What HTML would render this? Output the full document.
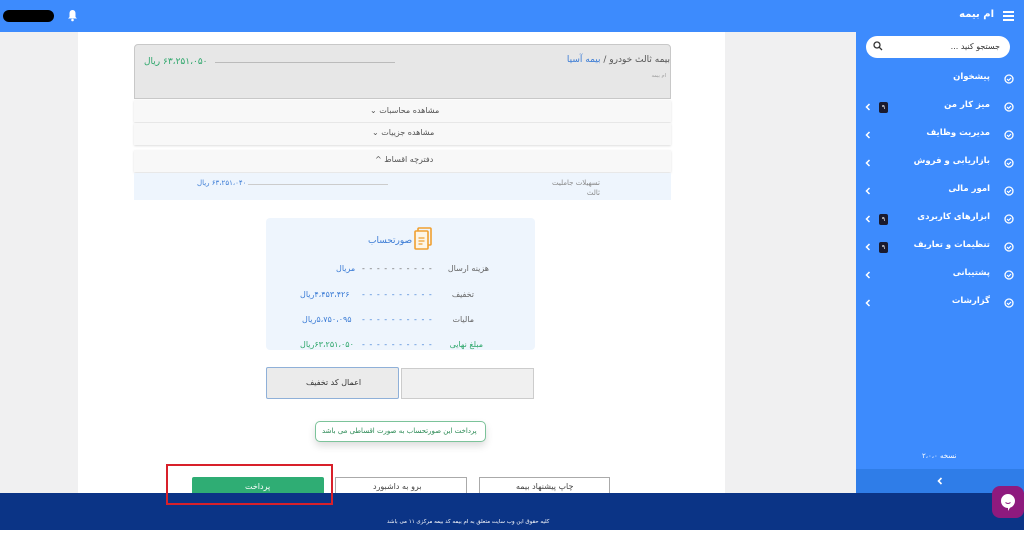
<!DOCTYPE html>
<html><head><meta charset="utf-8"><style>
*{margin:0;padding:0;box-sizing:border-box}
body{width:1024px;height:533px;overflow:hidden;position:relative;background:#fff;font-family:"DejaVu Sans","Liberation Sans",sans-serif;direction:rtl}
.a{position:absolute}
.t{font-size:8px;white-space:nowrap}
</style></head><body>
<div class="a" style="left:0;top:32px;width:78px;height:461px;background:#f0f0f1"></div>
<div class="a" style="left:725px;top:32px;width:131px;height:461px;background:#f0f0f1"></div>
<div class="a" style="left:0;top:0;width:1024px;height:32px;background:#3d8bfd"></div>
<div class="a" style="left:3px;top:10px;width:51px;height:12px;border-radius:6px;background:#000"></div>
<svg class="a" style="left:67px;top:9px" width="11" height="13" viewBox="0 0 11 13"><path d="M5.5 1C3.5 1 2.5 2.6 2.5 4.5V8L1 9.5H10L8.5 8V4.5C8.5 2.6 7.5 1 5.5 1Z" fill="#fff"/><circle cx="5.5" cy="11" r="1.3" fill="#fff"/></svg>
<div class="a t" style="right:30px;top:9px;color:#fff;font-size:10px;font-weight:bold">ام بیمه</div>
<div class="a" style="left:1003px;top:11px;width:11px;height:2px;background:#fff;box-shadow:0 4px 0 #fff,0 8px 0 #fff"></div>
<div class="a" style="left:856px;top:32px;width:168px;height:437px;background:#3d8bfd"></div>
<div class="a" style="left:856px;top:469px;width:168px;height:24px;background:#2f7de8"></div>
<svg class="a" style="left:937px;top:477px" width="6" height="8"><path d="M4.5 1L1.5 4L4.5 7" stroke="#fff" stroke-width="1.6" fill="none"/></svg>
<div class="a t" style="left:922px;top:452px;color:#fff;font-size:7px">نسخه ۲،۰،۰</div>
<div class="a" style="left:866px;top:36px;width:144px;height:22px;background:#fff;border-radius:11px"></div>
<div class="a t" style="right:24px;top:42px;color:#333">جستجو کنید ...</div>
<svg class="a" style="left:873px;top:41px" width="10" height="10"><circle cx="4" cy="4" r="3" fill="none" stroke="#333" stroke-width="1.3"/><path d="M6.3 6.3L9 9" stroke="#333" stroke-width="1.3"/></svg>
<div id="menu"></div>
<div class="a" style="left:134px;top:44px;width:537px;height:55px;background:#e7e7e7;border:1px solid #c8c8c8;border-radius:4px 4px 0 0"></div>
<div class="a t" style="right:354px;top:55px;color:#555;font-size:9px">بیمه ثالث خودرو / <span style="color:#3a7bd5">بیمه آسیا</span></div>
<div class="a t" style="right:358px;top:73px;color:#999;font-size:5px">ام بیمه</div>
<div class="a" style="left:215px;top:62px;width:180px;height:1px;background:#bbb"></div>
<div class="a t" style="left:144px;top:57px;color:#2ca66a;font-size:9px">۶۳،۲۵۱،۰۵۰ ریال</div>
<div class="a" style="left:134px;top:100px;width:537px;height:22px;background:#f8f8f8;box-shadow:0 1px 2px #ddd"></div>
<div class="a t" style="left:370px;top:106px;color:#555">مشاهده محاسبات ⌄</div>
<div class="a" style="left:134px;top:123px;width:537px;height:22px;background:#f8f8f8;box-shadow:0 1px 2px #ddd"></div>
<div class="a t" style="left:372px;top:128px;color:#555">مشاهده جزییات ⌄</div>
<div class="a" style="left:134px;top:150px;width:537px;height:22px;background:#f8f8f8;box-shadow:0 1px 2px #ddd"></div>
<div class="a t" style="left:375px;top:155px;color:#555">دفترچه اقساط ^</div>
<div class="a" style="left:134px;top:173px;width:537px;height:27px;background:#eef5fd"></div>
<div class="a" style="left:248px;top:184px;width:140px;height:1px;background:#ccc"></div>
<div class="a t" style="right:424px;top:178px;color:#888;font-size:7px;line-height:10px;white-space:normal;width:50px">تسهیلات جاملیت ثالث</div>
<div class="a t" style="left:197px;top:179px;color:#3a7bd5;font-size:7px">۶۳،۲۵۱،۰۴۰ ریال</div>
<div class="a" style="left:266px;top:218px;width:269px;height:132px;background:#eef5fd;border-radius:4px"></div>
<svg class="a" style="left:413px;top:227px" width="20" height="24" viewBox="0 0 20 24"><rect x="5" y="1" width="13" height="17" rx="1" fill="none" stroke="#f0a030" stroke-width="1.6"/><rect x="2" y="4" width="13" height="18" rx="1" fill="#fdf5e6" stroke="#f0a030" stroke-width="1.6"/><path d="M5.5 11h6M5.5 14h6M5.5 17h4" stroke="#f0a030" stroke-width="1.2"/></svg>
<div class="a t" style="left:368px;top:236px;color:#3a7bd5;font-size:9px">صورتحساب</div>
<div class="a t" style="right:535px;top:264px;color:#666">هزینه ارسال</div>
<div class="a t" style="left:362px;top:264px;color:#666;letter-spacing:1px">- - - - - - - - - -</div>
<div class="a t" style="left:336px;top:264px;color:#3a7bd5">مریال</div>
<div class="a t" style="right:550px;top:290px;color:#666">تخفیف</div>
<div class="a t" style="left:362px;top:290px;color:#3a7bd5;letter-spacing:1px">- - - - - - - - - -</div>
<div class="a t" style="left:300px;top:290px;color:#3a7bd5">۴،۴۵۳،۴۲۶ریال</div>
<div class="a t" style="right:550px;top:315px;color:#666">مالیات</div>
<div class="a t" style="left:362px;top:315px;color:#3a7bd5;letter-spacing:1px">- - - - - - - - - -</div>
<div class="a t" style="left:302px;top:315px;color:#3a7bd5">۵،۷۵۰،۰۹۵ریال</div>
<div class="a t" style="right:541px;top:340px;color:#2ca66a">مبلغ نهایی</div>
<div class="a t" style="left:362px;top:340px;color:#3a7bd5;letter-spacing:1px">- - - - - - - - - -</div>
<div class="a t" style="left:300px;top:340px;color:#2ca66a">۶۳،۲۵۱،۰۵۰ریال</div>
<div class="a" style="left:266px;top:367px;width:133px;height:32px;background:#ebebeb;border:1px solid #8fb0d8;border-radius:2px"></div>
<div class="a t" style="left:306px;top:378px;color:#333">اعمال کد تخفیف</div>
<div class="a" style="left:401px;top:368px;width:133px;height:31px;background:#f0f0f0;border:1px solid #ccc"></div>
<div class="a" style="left:315px;top:421px;width:171px;height:21px;background:#fff;border:1px solid #7cc39a;border-radius:5px;box-shadow:0 4px 8px #ddd"></div>
<div class="a t" style="left:322px;top:427px;color:#2c8a55;font-size:7px">پرداخت این صورتحساب به صورت اقساطی می باشد</div>
<div class="a" style="left:192px;top:477px;width:132px;height:20px;background:#2fad74;border-radius:2px"></div>
<div class="a t" style="left:245px;top:482px;color:#fff">پرداخت</div>
<div class="a" style="left:335px;top:477px;width:132px;height:20px;background:#fff;border:1px solid #aaa"></div>
<div class="a t" style="left:373px;top:482px;color:#444">برو به داشبورد</div>
<div class="a" style="left:479px;top:477px;width:131px;height:20px;background:#fff;border:1px solid #aaa"></div>
<div class="a t" style="left:516px;top:482px;color:#444">چاپ پیشنهاد بیمه</div>
<div class="a" style="left:0;top:493px;width:1024px;height:37px;background:#0b3486"></div>
<div class="a t" style="left:387px;top:519px;color:#fff;font-size:5.5px">کلیه حقوق این وب سایت متعلق به ام بیمه کد بیمه مرکزی ۱۱ می باشد</div>
<div class="a" style="left:166px;top:464px;width:167px;height:41px;border:2px solid #d8202a"></div>
<div class="a" style="left:992px;top:486px;width:32px;height:32px;background:#8e1a7e;border-radius:8px"></div>
<svg class="a" style="left:999px;top:493px" width="18" height="18"><path d="M9 1a7 7 0 1 0 0 14l0 3 2-3.3A7 7 0 0 0 9 1z" fill="#fff"/><path d="M6.5 9.5q2.5 2 5 0" stroke="#8e1a7e" fill="none"/></svg>
<script>
var items=[["پیشخوان",0,0],["میز کار من",1,1],["مدیریت وظایف",0,1],["بازاریابی و فروش",0,1],["امور مالی",0,1],["ابزارهای کاربردی",1,1],["تنظیمات و تعاریف",1,1],["پشتیبانی",0,1],["گزارشات",0,1]];
var h="";items.forEach(function(it,i){var y=76+i*28;
h+='<svg class="a" style="left:1004px;top:'+(y-2)+'px" width="10" height="10"><circle cx="5" cy="5" r="4" fill="none" stroke="#fff" stroke-width="1.3"/><path d="M3 5l1.5 1.5L7 4" stroke="#fff" stroke-width="1.2" fill="none"/></svg>';
h+='<div class="a t" style="right:34px;top:'+(y-4)+'px;color:#fff;font-size:8.5px;font-weight:bold">'+it[0]+'</div>';
if(it[1])h+='<div class="a" style="left:879px;top:'+(y-2)+'px;width:9px;height:11px;background:#1a1a2e;border-radius:2px;color:#fff;font-size:6px;text-align:center;line-height:11px">۹</div>';
if(it[2])h+='<svg class="a" style="left:865px;top:'+(y-1)+'px" width="6" height="8"><path d="M4.5 1L1.5 4L4.5 7" stroke="#fff" stroke-width="1.5" fill="none"/></svg>';});
document.getElementById("menu").outerHTML=h;
</script>
</body></html>
